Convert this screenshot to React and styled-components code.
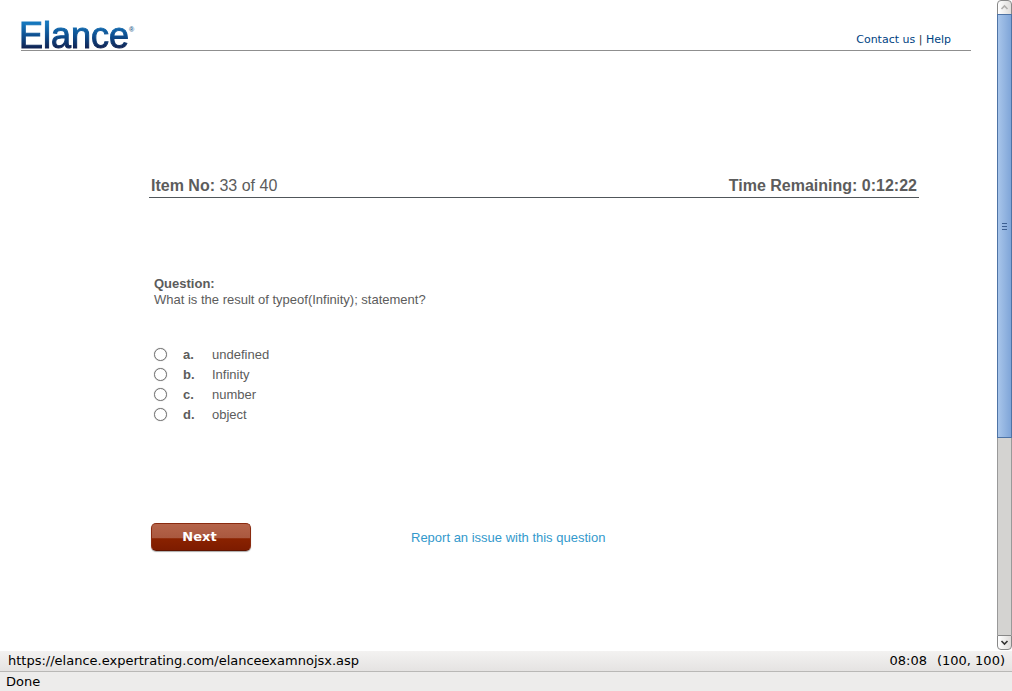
import React, { useState } from "react";
import styled, { createGlobalStyle, css } from "styled-components";

const GlobalStyle = createGlobalStyle`
  *, *::before, *::after { box-sizing: border-box; }
  body {
    margin: 0;
    background: #fff;
    color: #5c5c5c;
    font-family: "Liberation Sans", Arial, sans-serif;
    font-size: 13px;
    line-height: 16px;
  }
  a { text-decoration: none; }
  a:hover { text-decoration: underline; }
`;

const Browser = styled.div`
  display: flex;
  flex-direction: column;
  min-height: 100vh;
`;

const Viewport = styled.div`
  display: flex;
  flex: 1;
`;

const Page = styled.div`
  flex: 1;
  min-width: 0;
  padding: 20px 26px 0 21px;
`;

const Header = styled.header`
  display: flex;
  justify-content: space-between;
  align-items: flex-end;
  height: 31px;
  border-bottom: 1px solid #8f8f8f;
`;

const Logo = styled.div`
  display: flex;
  align-items: flex-start;
  height: 30px;
  font-size: 36px;
  line-height: 32px;
`;

const Wordmark = styled.span`
  margin-left: -2px;
  background: linear-gradient(#1577bd 10%, #0d4d8e 50%, #10204f 90%);
  background-clip: text;
  -webkit-background-clip: text;
  color: transparent;
  -webkit-text-stroke: 1px transparent;
`;

const Registered = styled.span`
  margin-top: 4px;
  color: #33668f;
  font-size: 7px;
  font-weight: bold;
  line-height: 12px;
`;

const HeaderLinks = styled.nav`
  padding: 0 20px 2px 0;
  font-family: "DejaVu Sans", Verdana, sans-serif;
  font-size: 11px;
  color: #333;

  a { color: #004382; }
`;

const Exam = styled.main`
  padding: 122px 52px 0 128px;
`;

const ExamStatus = styled.div`
  display: flex;
  justify-content: space-between;
  padding: 1px 2px 0;
  border-bottom: 1px solid #50565a;
  font-size: 16px;
  line-height: 23px;
`;

const Question = styled.fieldset`
  margin: 78px 0 0;
  padding: 0 0 0 5px;
  border: 0;
`;

const QuestionText = styled.legend`
  padding: 0;

  strong { display: block; }
`;

const Answers = styled.div`
  display: flex;
  flex-direction: column;
  align-items: flex-start;
  margin-top: 37px;
`;

const Answer = styled.label`
  display: grid;
  grid-template-columns: 29px 29px auto;
  align-items: center;
  height: 20px;
`;

const Radio = styled.input`
  appearance: none;
  width: 13px;
  height: 13px;
  margin: 0 0 2px;
  border: 1px solid #777;
  border-radius: 50%;
  background: #fff;
  box-shadow: 0 0 1px #999;

  &:checked { background: radial-gradient(#444 0 3px, #fff 4px); }
`;

const Actions = styled.div`
  display: flex;
  align-items: center;
  gap: 160px;
  margin: 98px 0 0 2px;
  padding-bottom: 40px;
`;

const NextButton = styled.button`
  width: 100px;
  height: 28px;
  padding: 0 3px 1px 0;
  border: 1px solid #8a2b10;
  border-bottom-color: #5f1400;
  border-radius: 5px;
  background: linear-gradient(#b5644a, #a9583f 55%, #8a2200 56%, #7d1c00);
  box-shadow: 0 1px 1px #aaa;
  color: #fff;
  font: bold 13px "DejaVu Sans", Verdana, sans-serif;
`;

const ReportLink = styled.a`
  padding-top: 2px;
  color: #3399cc;
`;

const ScrollBar = styled.div`
  display: flex;
  flex-direction: column;
  width: 15px;
  padding-bottom: 1px;
`;

const ScrollArrow = styled.button`
  display: flex;
  justify-content: center;
  align-items: center;
  height: 15px;
  padding: 0;
  border: 1px solid #888;
  border-radius: ${({ $down }) => ($down ? "0 0 4px 4px" : "4px 4px 0 0")};
  background: linear-gradient(90deg, #fff, #dedcda);
  color: ${({ $down }) => ($down ? "#333" : "#b0aeac")};
`;

const ScrollTrack = styled.div`
  display: flex;
  flex-direction: column;
  flex: 1;
  border: solid #999;
  border-width: 0 1px;
  background: #d4d3d1;
`;

const ScrollThumb = styled.div`
  display: flex;
  flex: 15 0 0;
  flex-direction: column;
  justify-content: center;
  align-items: center;
  gap: 2px;
  margin: -1px -1px 0;
  border: 1px solid #4e73a5;
  background: linear-gradient(90deg, #a8c5ea, #7fa5d8);

  span {
    width: 5px;
    height: 1px;
    background: #3c5f92;
  }
`;

const ScrollRest = styled.div`
  flex: 7 0 0;
`;

const barText = css`
  font-family: "DejaVu Sans", Verdana, sans-serif;
  font-size: 13px;
  color: #000;
`;

const AddressBar = styled.div`
  ${barText}
  display: flex;
  justify-content: space-between;
  padding: 0 7px 0 8px;
  border-bottom: 1px solid #b9b8b6;
  background: linear-gradient(#f3f2f1, #e5e3e2);
  line-height: 20px;
`;

const Readouts = styled.div`
  display: flex;
  gap: 10px;
`;

const StatusBar = styled.footer`
  ${barText}
  padding: 0 6px;
  background: #edeceb;
  line-height: 19px;
`;

const Chevron = ({ down }) => (
  <svg width="9" height="7" viewBox="0 0 9 7" fill="none" stroke="currentColor" strokeWidth="1.6" aria-hidden="true">
    <path d={down ? "M1.500 2l3 3l3-3" : "M1.500 5l3-3l3 3"} />
  </svg>
);

const options = [
  ["a", "undefined"],
  ["b", "Infinity"],
  ["c", "number"],
  ["d", "object"],
];

export default function App() {
  const [answer, setAnswer] = useState("");

  return (
    <Browser>
      <GlobalStyle />
      <Viewport>
        <Page>
          <Header>
            <Logo>
              <Wordmark>Elance</Wordmark>
              <Registered>®</Registered>
            </Logo>
            <HeaderLinks>
              <a href="#contact">Contact us</a> | <a href="#help">Help</a>
            </HeaderLinks>
          </Header>
          <Exam>
            <ExamStatus>
              <span><strong>Item No:</strong> 33 of 40</span>
              <strong>Time Remaining: 0:12:22</strong>
            </ExamStatus>
            <Question>
              <QuestionText>
                <strong>Question:</strong>
                What is the result of typeof(Infinity); statement?
              </QuestionText>
              <Answers>
                {options.map(([letter, text]) => (
                  <Answer key={letter}>
                    <Radio
                      type="radio"
                      name="answer"
                      value={letter}
                      checked={answer === letter}
                      onChange={() => setAnswer(letter)}
                    />
                    <strong>{letter}.</strong>
                    <span>{text}</span>
                  </Answer>
                ))}
              </Answers>
            </Question>
            <Actions>
              <NextButton type="button">Next</NextButton>
              <ReportLink href="#report">Report an issue with this question</ReportLink>
            </Actions>
          </Exam>
        </Page>
        <ScrollBar>
          <ScrollArrow type="button" aria-label="Scroll up"><Chevron /></ScrollArrow>
          <ScrollTrack>
            <ScrollThumb><span /><span /><span /></ScrollThumb>
            <ScrollRest />
          </ScrollTrack>
          <ScrollArrow type="button" aria-label="Scroll down" $down><Chevron down /></ScrollArrow>
        </ScrollBar>
      </Viewport>
      <AddressBar>
        <span>https://elance.expertrating.com/elanceexamnojsx.asp</span>
        <Readouts>
          <span>08:08</span>
          <span>(100, 100)</span>
        </Readouts>
      </AddressBar>
      <StatusBar>Done</StatusBar>
    </Browser>
  );
}
